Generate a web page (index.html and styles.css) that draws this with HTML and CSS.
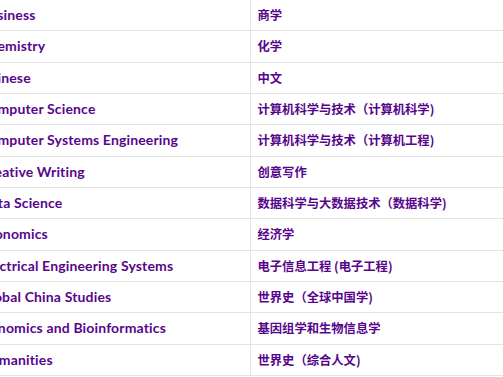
FILE: index.html
```html
<!DOCTYPE html>
<html lang="en">
<head>
<meta charset="utf-8">
<link rel="stylesheet" href="styles.css">
</head>
<body>
<div class="viewport">
<table class="majors">
<tbody>
<tr><td class="en">Business</td><td class="zh">商学</td></tr>
<tr><td class="en">Chemistry</td><td class="zh">化学</td></tr>
<tr><td class="en">Chinese</td><td class="zh">中文</td></tr>
<tr><td class="en">Computer Science</td><td class="zh">计算机科学与技术（计算机科学)</td></tr>
<tr><td class="en">Computer Systems Engineering</td><td class="zh">计算机科学与技术（计算机工程)</td></tr>
<tr><td class="en">Creative Writing</td><td class="zh">创意写作</td></tr>
<tr><td class="en">Data Science</td><td class="zh">数据科学与大数据技术（数据科学)</td></tr>
<tr><td class="en">Economics</td><td class="zh">经济学</td></tr>
<tr><td class="en">Electrical Engineering Systems</td><td class="zh">电子信息工程 (电子工程)</td></tr>
<tr><td class="en">Global China Studies</td><td class="zh">世界史（全球中国学)</td></tr>
<tr><td class="en">Genomics and Bioinformatics</td><td class="zh">基因组学和生物信息学</td></tr>
<tr><td class="en">Humanities</td><td class="zh">世界史（综合人文)</td></tr>
</tbody>
</table>
</div>
</body>
</html>
```
FILE: styles.css
```css
html, body {
  margin: 0;
  padding: 0;
  background: #fff;
}
.viewport {
  width: 503px;
  height: 377px;
  overflow: hidden;
}
.majors {
  border-collapse: collapse;
  margin-left: -27px;
  margin-top: -0.5px;
  width: 600px;
  font-family: "Lato", "Noto Sans CJK SC", sans-serif;
  font-weight: 700;
  font-size: 14px;
  letter-spacing: 0.15px;
  color: #57068c;
}
.majors td {
  height: 31.33px;
  padding: 0 7px;
  box-sizing: border-box;
  border-bottom: 1px solid #e3e3e3;
  vertical-align: middle;
  white-space: nowrap;
  line-height: 16px;
}
.majors td.en {
  width: 277px;
  border-right: 1px solid #e3e3e3;
}
.majors td.zh {
  font-family: "Noto Sans CJK SC", sans-serif;
  font-size: 12.3px;
  letter-spacing: 0;
}
```
